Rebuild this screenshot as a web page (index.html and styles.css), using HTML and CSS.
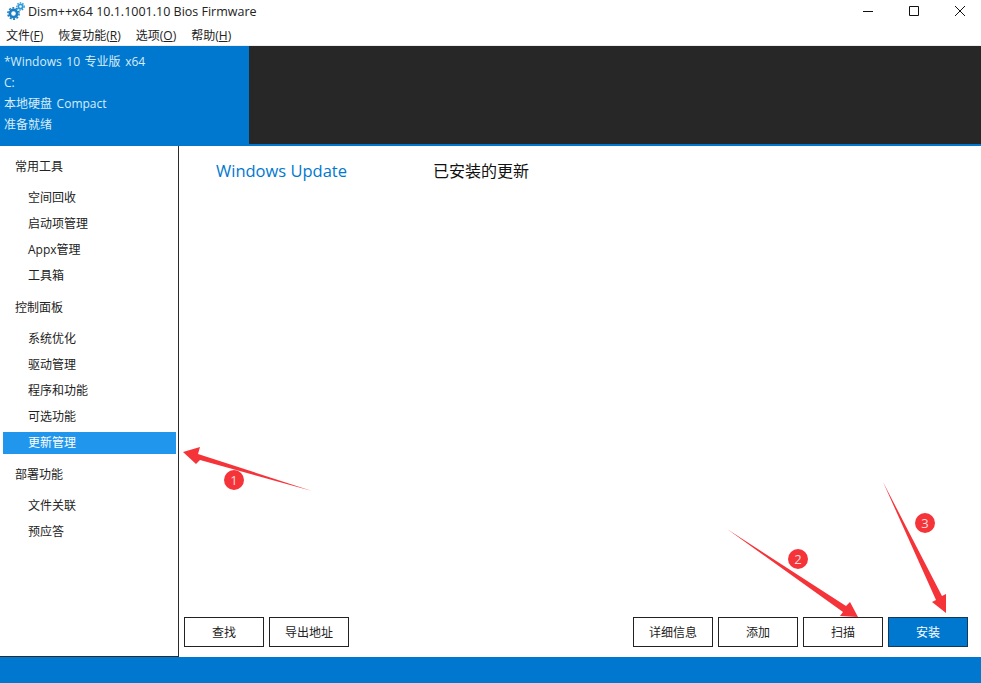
FILE: index.html
```html
<!DOCTYPE html>
<html lang="zh-CN">
<head>
    <meta charset="UTF-8">
    <title>Dism++x64</title>
    <link rel="stylesheet" href="styles.css">
</head>
<body>
    <!-- Title Bar -->
    <div class="titlebar">
        <svg class="app-icon" width="18" height="18" viewBox="0 0 18 18">
            <circle cx="6.5" cy="11.5" r="3.6" fill="none" stroke="#1b7fc4" stroke-width="2.6"/>
            <circle cx="6.5" cy="11.5" r="5.6" fill="none" stroke="#1b7fc4" stroke-width="1.6" stroke-dasharray="2 1.5"/>
            <circle cx="13.5" cy="4.5" r="2.2" fill="none" stroke="#2a9ad8" stroke-width="1.8"/>
            <circle cx="13.5" cy="4.5" r="3.7" fill="none" stroke="#2a9ad8" stroke-width="1.2" stroke-dasharray="1.5 1.2"/>
        </svg>
        <span class="app-title">Dism++x64 10.1.1001.10 Bios Firmware</span>
        <div class="window-buttons">
            <svg width="12" height="12" viewBox="0 0 12 12"><path d="M1 6.5H11" stroke="#111" fill="none"/></svg>
            <svg width="12" height="12" viewBox="0 0 12 12"><path d="M1.5 1.5H10.5V10.5H1.5Z" stroke="#111" fill="none"/></svg>
            <svg width="12" height="12" viewBox="0 0 12 12"><path d="M1 1L11 11M11 1L1 11" stroke="#111" fill="none"/></svg>
        </div>
    </div>

    <!-- Menu -->
    <div class="menubar">
        <span class="menu-item">文件(<u>F</u>)</span>
        <span class="menu-item">恢复功能(<u>R</u>)</span>
        <span class="menu-item">选项(<u>O</u>)</span>
        <span class="menu-item">帮助(<u>H</u>)</span>
    </div>

    <!-- Session Header -->
    <div class="session">
        <div class="session-info">
            <div>*Windows 10 专业版 x64</div>
            <div>C:</div>
            <div>本地硬盘 Compact</div>
            <div>准备就绪</div>
        </div>
        <div class="session-rest"></div>
    </div>

    <div class="content">
        <!-- Sidebar -->
        <div class="sidebar">
            <div class="group">
                <div class="group-title">常用工具</div>
                <div class="nav-item">空间回收</div>
                <div class="nav-item">启动项管理</div>
                <div class="nav-item">Appx管理</div>
                <div class="nav-item">工具箱</div>
            </div>
            <div class="group">
                <div class="group-title">控制面板</div>
                <div class="nav-item">系统优化</div>
                <div class="nav-item">驱动管理</div>
                <div class="nav-item">程序和功能</div>
                <div class="nav-item">可选功能</div>
                <div class="nav-item active">更新管理</div>
            </div>
            <div class="group">
                <div class="group-title">部署功能</div>
                <div class="nav-item">文件关联</div>
                <div class="nav-item">预应答</div>
            </div>
        </div>

        <!-- Main Panel -->
        <div class="main">
            <div class="tabs">
                <span class="tab tab-active">Windows Update</span>
                <span class="tab">已安装的更新</span>
            </div>
            <div class="actions">
                <div class="action-group">
                    <button class="button">查找</button>
                    <button class="button">导出地址</button>
                </div>
                <div class="action-group">
                    <button class="button">详细信息</button>
                    <button class="button">添加</button>
                    <button class="button">扫描</button>
                    <button class="button primary">安装</button>
                </div>
            </div>
        </div>
    </div>

    <div class="statusbar"></div>

    <!-- Red annotations drawn over the window -->
    <svg class="annotations" width="981" height="683" viewBox="0 0 981 683">
        <g fill="#f5343a">
            <polygon points="183,452 200,447 198,454 312,491 200,460 196,464"/>
            <polygon points="727,529 846,606 850,602 858,617 840,616 843,612"/>
            <polygon points="883,482 942,596 946,594 946,613 932,602 936,600"/>
            <circle cx="234" cy="480" r="10"/>
            <circle cx="798" cy="559" r="10"/>
            <circle cx="925" cy="523" r="10"/>
        </g>
        <g class="badge-text" fill="#ffd9d9" text-anchor="middle">
            <text x="234" y="485">1</text>
            <text x="798" y="564">2</text>
            <text x="925" y="528">3</text>
        </g>
    </svg>
</body>
</html>
```

FILE: styles.css
```css
/* Reset and Basic Styles */
* {
    box-sizing: border-box;
    margin: 0;
    padding: 0;
}

body {
    position: relative;
    width: 981px;
    height: 683px;
    overflow: hidden;
    display: flex;
    flex-direction: column;
    background-color: #fff;
    color: #222;
    font-family: "Open Sans", "Noto Sans CJK SC", sans-serif;
    font-size: 12px;
}

/* Title Bar */
.titlebar {
    height: 22px;
    display: flex;
    align-items: center;
    padding-left: 7px;
}

.app-icon {
    margin-right: 3px;
}

.app-title {
    font-size: 12.5px;
    color: #222;
}

.window-buttons {
    margin-left: auto;
    margin-right: 15px;
    display: flex;
    gap: 34px;
}

/* Menu */
.menubar {
    height: 24px;
    display: flex;
    align-items: center;
    padding: 2px 0 0 6px;
    gap: 15px;
    border-bottom: 1px solid #eee;
}

/* Session Header */
.session {
    height: 98px;
    display: flex;
}

.session-info {
    width: 249px;
    padding: 5px 0 0 4px;
    background-color: #0078cf;
    color: #d8ecfa;
    line-height: 21px;
    word-spacing: 1.5px;
}

.session-rest {
    flex: 1;
    background-color: #272727;
}

/* Content */
.content {
    flex: 1;
    display: flex;
    border-top: 2px solid #0078cf;
}

.sidebar {
    width: 179px;
    padding-top: 10px;
    border-right: 1px solid #2b2b2b;
    border-bottom: 1px solid #2b2b2b;
}

.group {
    margin-bottom: 10px;
}

.group-title {
    height: 22px;
    line-height: 22px;
    margin-bottom: 9px;
    padding-left: 15px;
}

.nav-item {
    height: 22px;
    line-height: 22px;
    margin: 0 2px 4px 3px;
    padding-left: 25px;
}

.nav-item.active {
    background-color: #2196ed;
    color: #fff;
}

.group .nav-item:last-child {
    margin-bottom: 0;
}

/* Main Panel */
.main {
    flex: 1;
    display: flex;
    flex-direction: column;
    justify-content: space-between;
    padding: 13px 13px 10px 5px;
}

.tabs {
    display: flex;
    align-items: center;
    height: 22px;
    padding-left: 32px;
}

.tab {
    font-size: 16px;
    color: #111;
}

.tab-active {
    width: 217px;
    font-size: 16.5px;
    color: #0078cf;
}

.actions {
    display: flex;
    justify-content: space-between;
}

.action-group {
    display: flex;
    gap: 5px;
}

.button {
    width: 80px;
    height: 30px;
    background-color: #fff;
    border: 1px solid #222;
    color: #222;
    font-family: inherit;
    font-size: 12px;
}

.button.primary {
    background-color: #0078cf;
    border-color: #123a5c;
    color: #fff;
}

.statusbar {
    height: 26px;
    background-color: #0078cf;
}

/* Annotations */
.annotations {
    position: absolute;
    left: 0;
    top: 0;
}

.badge-text {
    font-size: 13px;
}
```
